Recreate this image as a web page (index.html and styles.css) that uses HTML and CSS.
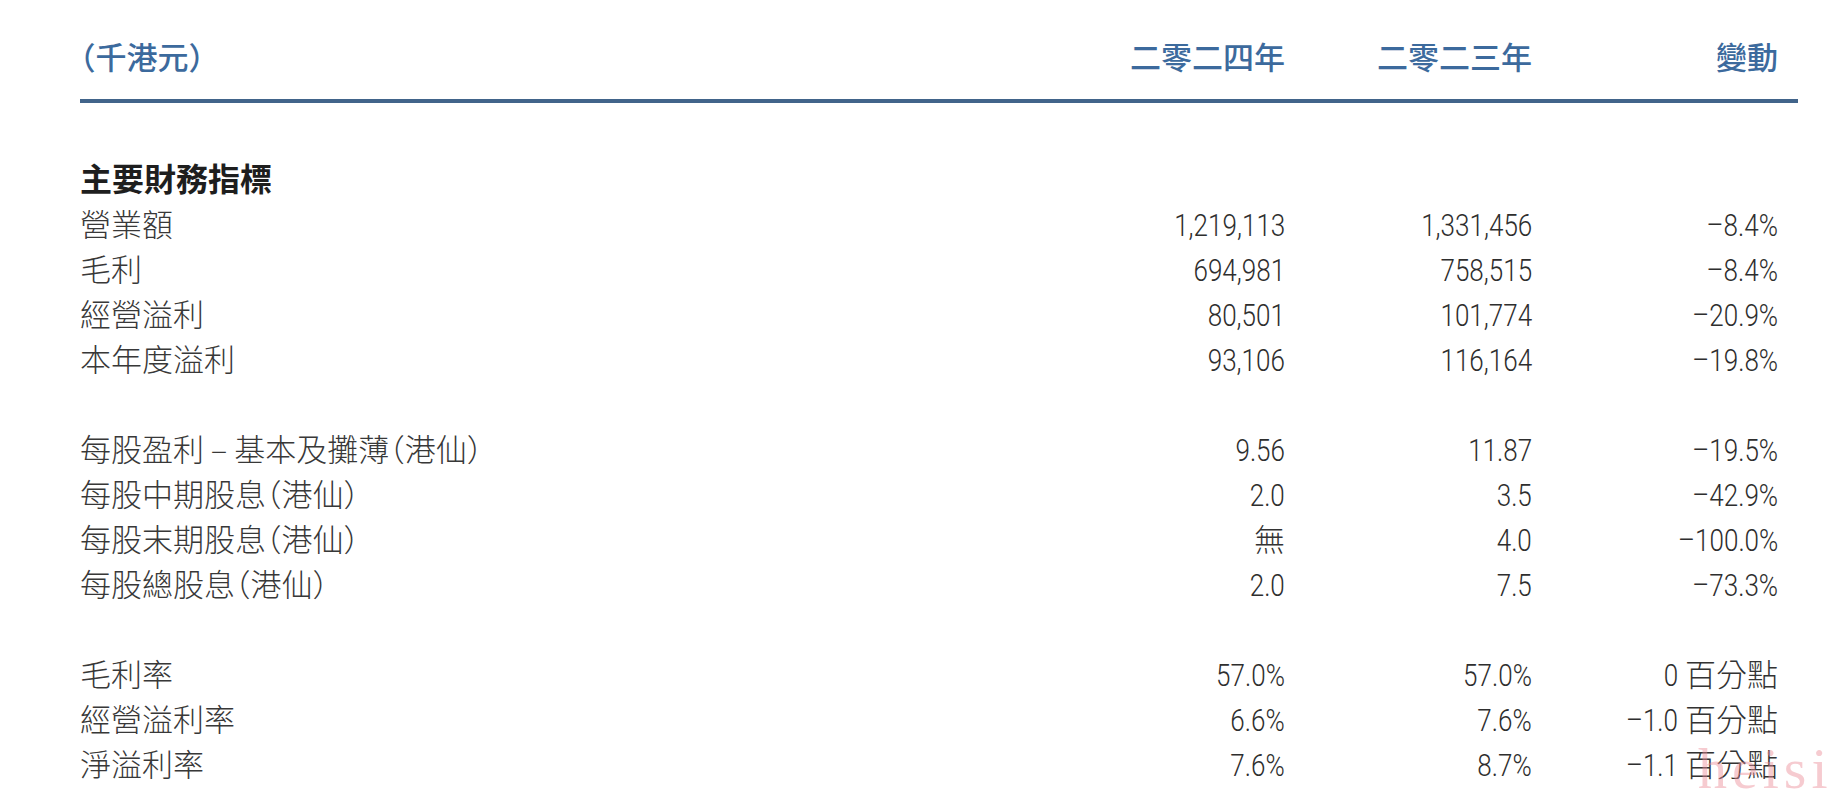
FILE: index.html
```html
<!DOCTYPE html>
<html lang="zh-Hant">
<head>
<meta charset="utf-8">
<title>主要財務指標</title>
<link rel="stylesheet" href="styles.css">
</head>
<body>
<main class="page">
  <table class="fin">
    <colgroup>
      <col class="c-label">
      <col class="c-num">
      <col class="c-num">
      <col class="c-chg">
    </colgroup>
    <thead>
      <tr>
        <th class="label">（千港元）</th>
        <th class="num n1">二零二四年</th>
        <th class="num n2">二零二三年</th>
        <th class="num n3">變動</th>
      </tr>
    </thead>
    <tbody>
      <tr class="title-row"><td class="label title" colspan="4">主要財務指標</td></tr>
      <tr><td class="label">營業額</td><td class="num n1"><span class="v">1,219,113</span></td><td class="num n2"><span class="v">1,331,456</span></td><td class="num n3"><span class="v">–8.4%</span></td></tr>
      <tr><td class="label">毛利</td><td class="num n1"><span class="v">694,981</span></td><td class="num n2"><span class="v">758,515</span></td><td class="num n3"><span class="v">–8.4%</span></td></tr>
      <tr><td class="label">經營溢利</td><td class="num n1"><span class="v">80,501</span></td><td class="num n2"><span class="v">101,774</span></td><td class="num n3"><span class="v">–20.9%</span></td></tr>
      <tr><td class="label">本年度溢利</td><td class="num n1"><span class="v">93,106</span></td><td class="num n2"><span class="v">116,164</span></td><td class="num n3"><span class="v">–19.8%</span></td></tr>
      <tr class="spacer"><td colspan="4"></td></tr>
      <tr><td class="label">每股盈利 – 基本及攤薄（港仙）</td><td class="num n1"><span class="v">9.56</span></td><td class="num n2"><span class="v">11.87</span></td><td class="num n3"><span class="v">–19.5%</span></td></tr>
      <tr><td class="label">每股中期股息（港仙）</td><td class="num n1"><span class="v">2.0</span></td><td class="num n2"><span class="v">3.5</span></td><td class="num n3"><span class="v">–42.9%</span></td></tr>
      <tr><td class="label">每股末期股息（港仙）</td><td class="num n1"><span class="cjk">無</span></td><td class="num n2"><span class="v">4.0</span></td><td class="num n3"><span class="v">–100.0%</span></td></tr>
      <tr><td class="label">每股總股息（港仙）</td><td class="num n1"><span class="v">2.0</span></td><td class="num n2"><span class="v">7.5</span></td><td class="num n3"><span class="v">–73.3%</span></td></tr>
      <tr class="spacer"><td colspan="4"></td></tr>
      <tr><td class="label">毛利率</td><td class="num n1"><span class="v">57.0%</span></td><td class="num n2"><span class="v">57.0%</span></td><td class="num n3"><span class="v">0</span> <span class="cjk">百分點</span></td></tr>
      <tr><td class="label">經營溢利率</td><td class="num n1"><span class="v">6.6%</span></td><td class="num n2"><span class="v">7.6%</span></td><td class="num n3"><span class="v">–1.0</span> <span class="cjk">百分點</span></td></tr>
      <tr><td class="label">淨溢利率</td><td class="num n1"><span class="v">7.6%</span></td><td class="num n2"><span class="v">8.7%</span></td><td class="num n3"><span class="v">–1.1</span> <span class="cjk">百分點</span></td></tr>
    </tbody>
  </table>
  <div class="watermark">heisi</div>
</main>
</body>
</html>
```

FILE: styles.css
```css
html, body {
  margin: 0;
  padding: 0;
  background: #ffffff;
}

.page {
  position: relative;
  width: 1840px;
  height: 806px;
  padding-left: 80px;
  box-sizing: border-box;
  overflow: hidden;
  font-family: "Noto Sans CJK TC", "Noto Sans CJK SC", sans-serif;
  color: #383838;
}

.fin {
  width: 1718px;
  border-collapse: collapse;
  table-layout: fixed;
  font-size: 31px;
  line-height: 45px;
}

.c-label { width: 984px; }
.c-num { width: 245px; }
.c-chg { width: 244px; }

.fin th,
.fin td {
  padding: 0;
  white-space: nowrap;
}

.fin tbody td {
  height: 45px;
}

.fin thead th {
  height: 45px;
  padding-top: 33px;
  padding-bottom: 21px;
  border-bottom: 4px solid #41648a;
  color: #3c6a9d;
  font-weight: 500;
  font-feature-settings: "halt";
  font-family: "Noto Sans CJK TC", sans-serif;
  vertical-align: middle;
}

.label {
  text-align: left;
  font-weight: 300;
  font-feature-settings: "halt";
}

.fin thead th.label {
  font-weight: 500;
}

.num {
  text-align: right;
  font-family: "Noto Sans CJK TC", sans-serif;
  color: #333333;
}

.v {
  display: inline-block;
  line-height: 1;
  font-family: Roboto, "Liberation Sans", sans-serif;
  font-weight: 300;
  transform: scaleX(0.84);
  transform-origin: right center;
  color: #2e2e2e;
}

.n1 { padding-right: 24px !important; }
.n2 { padding-right: 22px !important; }
.n3 { padding-right: 20px !important; }

.cjk {
  font-family: "Noto Sans CJK TC", sans-serif;
  font-weight: 300;
}

.title-row td {
  padding-top: 52px;
}

.title {
  font-weight: 700;
  font-size: 32px;
  color: #1e1e1e;
}

.spacer td {
  height: 45px;
}

.watermark {
  position: absolute;
  left: 1698px;
  top: 736px;
  font-family: "Liberation Serif", serif;
  font-size: 58px;
  line-height: 66px;
  letter-spacing: 5px;
  color: rgba(236, 140, 150, 0.45);
  pointer-events: none;
}
```
